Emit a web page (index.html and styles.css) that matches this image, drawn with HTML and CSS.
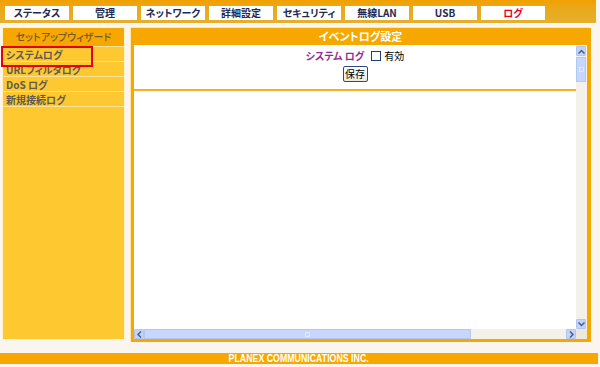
FILE: index.html
```html
<!DOCTYPE html>
<html lang="ja">
<head>
<meta charset="utf-8">
<title>イベントログ設定</title>
<link rel="stylesheet" href="styles.css">
</head>
<body>
<div class="page">
  <nav class="topbar">
    <a class="tab">ステータス</a>
    <a class="tab">管理</a>
    <a class="tab">ネットワーク</a>
    <a class="tab">詳細設定</a>
    <a class="tab">セキュリティ</a>
    <a class="tab">無線LAN</a>
    <a class="tab">USB</a>
    <a class="tab tab-current">ログ</a>
  </nav>
  <div class="main">
    <aside class="sidebar">
      <div class="side-head">セットアップウィザード</div>
      <ul class="side-list">
        <li class="side-item side-active">システムログ</li>
        <li class="side-item">URLフィルタログ</li>
        <li class="side-item">DoS ログ</li>
        <li class="side-item">新規接続ログ</li>
      </ul>
    </aside>
    <section class="panel">
      <h1 class="panel-head">イベントログ設定</h1>
      <div class="frame">
        <div class="view">
          <div class="form-row">
            <span class="field-label">システム ログ</span>
            <span class="checkbox"></span>
            <span class="cb-label">有効</span>
          </div>
          <div class="btn-row"><button class="save-btn">保存</button></div>
          <div class="rule"></div>
        </div>
        <div class="vscroll">
          <div class="sb-btn"><svg width="7" height="5" viewBox="0 0 7 5"><path d="M0.5 4.5 L3.5 1.5 L6.5 4.5" fill="none" stroke="#4a5d85" stroke-width="1.5"/></svg></div>
          <div class="vthumb"><span class="grip"></span></div>
          <div class="vtrack"></div>
          <div class="sb-btn"><svg width="7" height="5" viewBox="0 0 7 5"><path d="M0.5 0.5 L3.5 3.5 L6.5 0.5" fill="none" stroke="#4a5d85" stroke-width="1.5"/></svg></div>
        </div>
        <div class="hscroll">
          <div class="sb-btn"><svg width="5" height="7" viewBox="0 0 5 7"><path d="M4 0.5 L1 3.5 L4 6.5" fill="none" stroke="#4a5d85" stroke-width="1.5"/></svg></div>
          <div class="hthumb"><span class="grip"></span></div>
          <div class="htrack"></div>
          <div class="sb-btn"><svg width="5" height="7" viewBox="0 0 5 7"><path d="M1 0.5 L4 3.5 L1 6.5" fill="none" stroke="#4a5d85" stroke-width="1.5"/></svg></div>
        </div>
        <div class="corner"></div>
      </div>
    </section>
  </div>
  <footer class="footer"><span class="footer-text">PLANEX COMMUNICATIONS INC.</span></footer>
</div>
</body>
</html>
```

FILE: styles.css
```css
* { box-sizing: border-box; }
html, body { margin: 0; padding: 0; }
body {
  background: #faf6ef;
  font-family: "Noto Sans CJK JP", "Liberation Sans", sans-serif;
  font-feature-settings: "palt";
  width: 600px;
  height: 367px;
  overflow: hidden;
}
.page { width: 598px; }

.topbar {
  height: 24px;
  width: 596px;
  display: flex;
  gap: 4px;
  padding: 6px 0 0 5px;
  background: linear-gradient(#f2a000 0, #eaa818 30%, #e6b02c 100%);
  border-bottom: 1px solid #fffaf0;
}
.tab {
  width: 64px;
  height: 14px;
  background: #fff;
  color: #1e2b4e;
  font-size: 10px;
  font-weight: bold;
  line-height: 14px;
  text-align: center;
}
.tab-current { color: #e8001a; }

.main {
  display: flex;
  padding: 4px 0 0 3px;
  gap: 7px;
}
.sidebar {
  width: 121px;
  height: 311px;
  background: #fec830;
  box-shadow: 0 0 0 1px #fff2cc;
}
.side-head {
  height: 19px;
  background: #f6a800;
  color: #76592f;
  font-size: 10px;
  font-weight: 500;
  line-height: 18px;
  text-align: center;
  border-bottom: 1px solid #fde39a;
}
.side-list { list-style: none; margin: 0; padding: 0; }
.side-item {
  height: 15px;
  padding: 1px 0 0 3px;
  font-size: 10px;
  line-height: 13px;
  font-weight: bold;
  color: #5e5a52;
  border-bottom: 1px solid #fde39a;
}
.side-active { position: relative; }
.side-active::after {
  content: "";
  position: absolute;
  left: -2px;
  top: -1px;
  width: 88px;
  height: 17px;
  border: 2px solid #e2001a;
}

.panel {
  width: 460px;
  height: 314px;
  background: #f6a800;
  padding: 0 4px 3px 3px;
  display: flex;
  flex-direction: column;
  box-shadow: -1px -1px 0 0 #fde6b0;
}
.panel-head {
  margin: 0;
  height: 17px;
  color: #fff;
  font-size: 11px;
  font-weight: bold;
  line-height: 17px;
  text-align: center;
}
.frame {
  flex: 1;
  display: grid;
  grid-template-columns: 1fr 11px;
  grid-template-rows: 1fr 10px;
  background: #fff;
}
.view {
  padding-top: 5px;
  display: flex;
  flex-direction: column;
  align-items: center;
}
.form-row {
  display: flex;
  align-items: center;
  height: 11px;
}
.field-label {
  color: #8e2f93;
  font-size: 10px;
  font-weight: bold;
}
.checkbox {
  width: 10px;
  height: 10px;
  border: 1px solid #1c3e6e;
  background: #fff;
  margin: 0 3px 0 7px;
}
.cb-label { font-size: 10px; color: #000; }
.btn-row { margin-top: 5px; height: 17px; display: flex; }
.save-btn {
  width: 25px;
  height: 16px;
  padding: 0;
  font-family: inherit;
  font-size: 10px;
  line-height: 12px;
  border: 1px solid #2f4a7a;
  border-radius: 2px;
  background: linear-gradient(#fff, #ece9de);
  color: #000;
}
.rule {
  align-self: stretch;
  height: 2px;
  margin-top: 6px;
  background: #f6b020;
}

.vscroll {
  display: flex;
  flex-direction: column;
  background: #f3f1ea;
  padding-top: 1px;
}
.sb-btn {
  display: flex;
  align-items: center;
  justify-content: center;
  width: 10px;
  height: 10px;
  background: #c3d4fc;
  border: 1px solid #b1c6f3;
  border-radius: 1px;
  flex: none;
}
.vthumb {
  height: 25px;
  width: 10px;
  margin-top: 1px;
  background: #c6d6fd;
  border: 1px solid #b4c8f5;
  display: flex;
  align-items: center;
  justify-content: center;
}
.vtrack { flex: 1; }
.hscroll {
  display: flex;
  background: #f3f1ea;
}
.hthumb {
  width: 327px;
  background: #c6d6fd;
  border: 1px solid #b4c8f5;
  display: flex;
  align-items: center;
  justify-content: center;
}
.htrack { flex: 1; }
.grip {
  width: 5px;
  height: 5px;
  border: 1px solid #e3ebff;
}
.corner { background: #ece9dc; }

.footer {
  margin-top: 11px;
  height: 11px;
  width: 598px;
  background: #f6a800;
  display: flex;
  align-items: center;
  justify-content: center;
}
.footer-text {
  color: #fff;
  font-family: "Liberation Sans", sans-serif;
  font-size: 10px;
  line-height: 1;
  font-weight: bold;
  transform: scaleX(0.88);
}
```
